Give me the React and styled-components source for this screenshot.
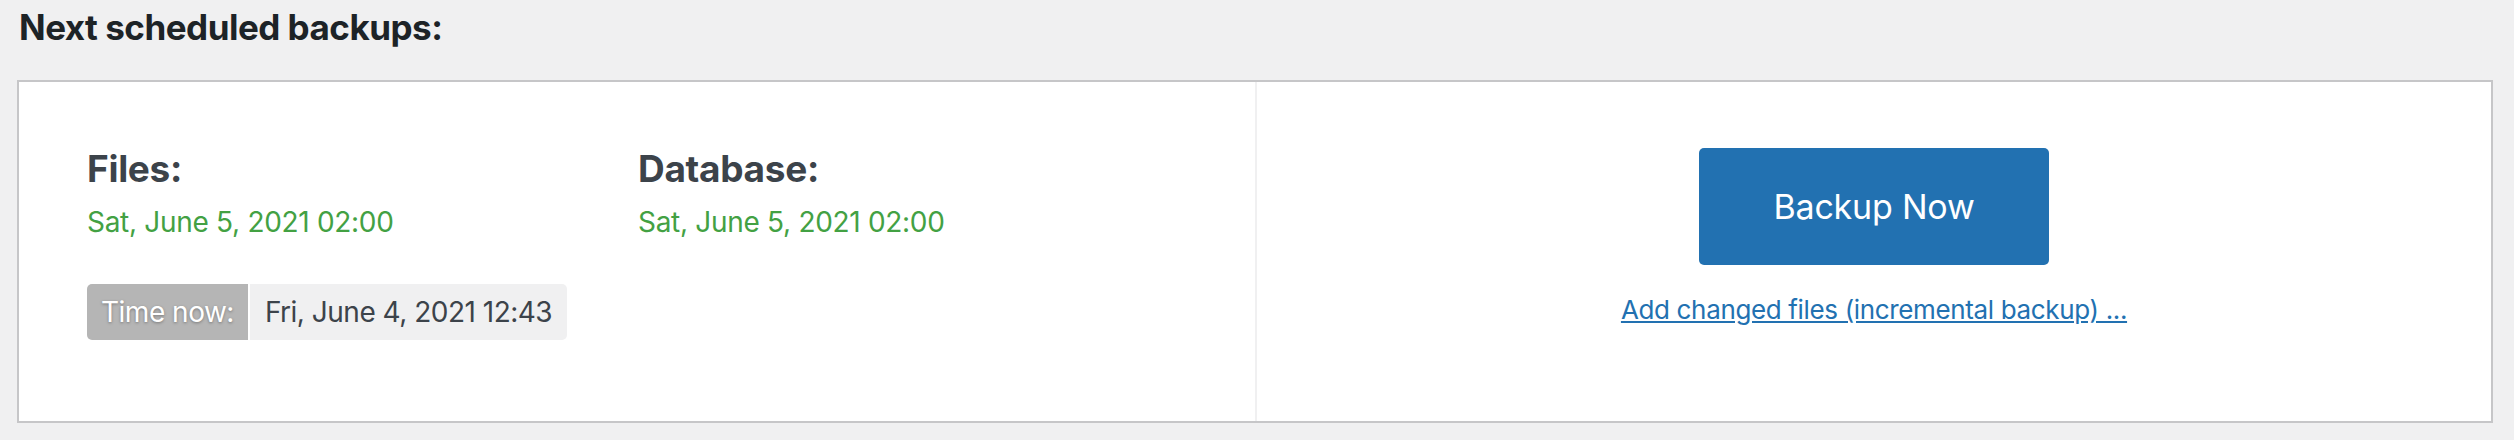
import React from 'react';
import styled, { createGlobalStyle } from 'styled-components';

const GlobalStyle = createGlobalStyle`
  body {
    margin: 0;
    background: #f0f0f1;
    font-family: Inter, "Liberation Sans", Arial, sans-serif;
    color: #3c434a;
  }
`;

const Page = styled.div`
  padding: 6px 21px 17px 17px;
`;

const Title = styled.h3`
  margin: 0 0 32px 2px;
  font-size: 35px;
  font-weight: 700;
  letter-spacing: -0.5px;
  line-height: normal;
  color: #1d2327;
`;

const Panel = styled.div`
  display: grid;
  grid-template-columns: 1fr 1fr;
  background: #fff;
  border: 2px solid #c6c6c8;
`;

const Schedule = styled.div`
  padding: 64px 68px 81px;
`;

const Columns = styled.div`
  display: grid;
  grid-template-columns: 551px auto;
`;

const Label = styled.div`
  font-size: 37px;
  font-weight: 700;
  letter-spacing: -0.3px;
  color: #3c434a;
`;

const When = styled.div`
  margin-top: 14px;
  font-size: 28px;
  letter-spacing: -0.3px;
  color: #43a143;
`;

const Clock = styled.div`
  display: inline-flex;
  margin-top: 45px;
  border-radius: 5px;
  overflow: hidden;
  font-size: 28px;
  letter-spacing: -0.5px;
`;

const ClockPart = styled.span`
  padding: 11px ${(p) => (p.$label ? '14px' : '15px')};
  background: ${(p) => (p.$label ? '#b5b5b5' : '#f0f0f1')};
  color: ${(p) => (p.$label ? '#fff' : '#3c434a')};
  text-shadow: ${(p) => (p.$label ? '0 1px 3px rgba(0,0,0,0.35)' : 'none')};
  border-left: ${(p) => (p.$label ? 'none' : '2px solid #fff')};
`;

const Actions = styled.div`
  display: flex;
  flex-direction: column;
  align-items: center;
  padding-top: 66px;
  border-left: 2px solid #f0f0f1;
`;

const BackupButton = styled.button`
  width: 350px;
  height: 117px;
  border: 0;
  border-radius: 5px;
  background: #2271b1;
  color: #fff;
  font-family: inherit;
  font-size: 34px;
  letter-spacing: -0.2px;
  cursor: pointer;
`;

const IncrementalLink = styled.a`
  margin-top: 29px;
  font-size: 26px;
  letter-spacing: -0.35px;
  color: #2271b1;
  text-decoration: underline;
  cursor: pointer;
`;

const schedules = [
  { label: 'Files:', when: 'Sat, June 5, 2021 02:00' },
  { label: 'Database:', when: 'Sat, June 5, 2021 02:00' },
];

export default function App() {
  return (
    <Page>
      <GlobalStyle />
      <Title>Next scheduled backups:</Title>
      <Panel>
        <Schedule>
          <Columns>
            {schedules.map((s) => (
              <div key={s.label}>
                <Label>{s.label}</Label>
                <When>{s.when}</When>
              </div>
            ))}
          </Columns>
          <Clock>
            <ClockPart $label>Time now:</ClockPart>
            <ClockPart>Fri, June 4, 2021 12:43</ClockPart>
          </Clock>
        </Schedule>
        <Actions>
          <BackupButton>Backup Now</BackupButton>
          <IncrementalLink>Add changed files (incremental backup) ...</IncrementalLink>
        </Actions>
      </Panel>
    </Page>
  );
}
